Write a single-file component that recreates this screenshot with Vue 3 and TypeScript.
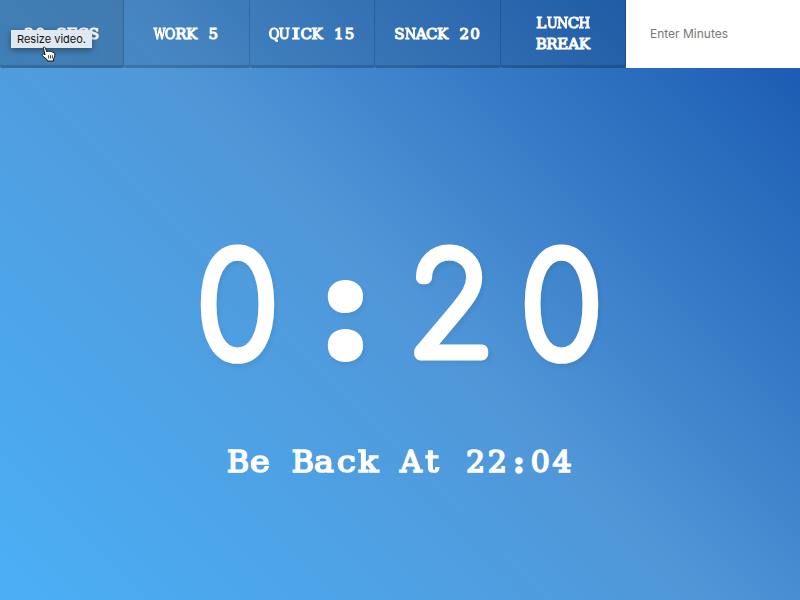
<script setup lang="ts">
const presets: string[] = ['20 SECS', 'WORK 5', 'QUICK 15', 'SNACK 20', 'LUNCH BREAK']

// Capitals are squeezed or stretched so each one fills a typewriter cell.
const FIT: Record<string, number> = { W: 0.76, N: 0.86, H: 0.87, U: 0.88, O: 0.88, Q: 0.88, I: 1.4 }
const presetWords = presets.map((label) => ({
  label,
  stacked: label.length > 8,
  words: label.split(' ').map((word) => [...word].map((ch) => ({ ch, scale: FIT[ch] ?? 1 }))),
}))

const endWords: string[][] = 'Be Back At 22:04'.split(' ').map((w) => [...w])
</script>

<template>
  <div class="timer">
    <div class="controls">
      <button v-for="(p, i) in presetWords" :key="p.label" class="preset" :class="{ active: i === 0, stacked: p.stacked }">
        <span v-for="(word, w) in p.words" :key="w" class="word"><span v-for="(c, k) in word" :key="k" class="cell"><span class="glyph" :style="{ transform: `scaleX(${c.scale})` }">{{ c.ch }}</span></span></span>
      </button>
      <form class="custom">
        <input class="minutes" type="text" placeholder="Enter Minutes" />
      </form>
    </div>
    <main class="display">
      <svg class="time-left" viewBox="0 0 432 140" width="432" height="140">
        <g fill="#fff" stroke="#fff" stroke-linejoin="round" text-anchor="middle">
          <text class="digit" transform="translate(53.500 116) scale(.94 .98)">0</text>
          <text class="colon" transform="translate(161.500 112) scale(1.080 1)">:</text>
          <text class="digit" transform="translate(267 113.500) scale(.96 .96)">2</text>
          <text class="digit" transform="translate(377.500 116) scale(.94 .98)">0</text>
        </g>
      </svg>
      <p class="end-time"><span v-for="(word, w) in endWords" :key="w" class="word"><span v-for="(c, k) in word" :key="k" class="cell"><span class="glyph" :class="{ dots: c === ':', lower: /[a-z]/.test(c) }">{{ c }}</span></span></span></p>
    </main>
    <div class="tooltip">Resize video.</div>
    <svg class="cursor" viewBox="0 0 16 17" width="16" height="17">
      <path d="M4.100 8.700 2.300 2.300C1.900.9 3.700.5 4.200 1.700L6 6c0-1.200 1.600-1.400 2-.2.3-1 1.700-1 2 .2.5-.8 1.800-.4 2 .7 1.200-.5 1.800.4 1.800 1.400.1 2.200-.5 3.500-1.200 4.700l-.1 2.200H6.300l-.4-1.600C4.700 12.500 3.200 11.200 1.300 9.800.3 8.800 1.500 7.400 2.700 8z" fill="#fff" stroke="#111" stroke-width="1" stroke-linejoin="round" />
      <path d="M7.600 9.200v3.300M9.500 9.200v3.300M11.400 9.200v3.300" stroke="#111" stroke-width=".8" />
    </svg>
  </div>
</template>

<style>
body {
  margin: 0;
}
</style>

<style scoped>
.timer {
  position: relative;
  display: flex;
  flex-direction: column;
  width: 100%;
  height: 100vh;
  overflow: hidden;
  color: #fff;
  font-family: 'DejaVu Serif', serif;
  background: linear-gradient(45deg, #4baff6 0%, #5097d8 50%, #1656af 100%);
}

.controls {
  display: flex;
  height: 68px;
}

.preset {
  display: flex;
  flex: 0 0 125.5px;
  gap: 10.8px;
  align-items: center;
  justify-content: center;
  box-sizing: border-box;
  margin: 0;
  padding: 3px 0 0;
  border: 0;
  border-right: 1px solid rgba(0, 0, 0, 0.16);
  border-bottom: 3px solid rgba(0, 0, 0, 0.16);
  border-radius: 0 0 2px 2px;
  background: rgba(0, 0, 0, 0.1);
  color: #fff;
  font-family: inherit;
  font-size: 15px;
  font-weight: 400;
  line-height: 21px;
  -webkit-text-stroke: 1.1px #fff;
}

.preset.stacked {
  flex-direction: column;
  gap: 0;
}

.preset.active {
  flex-basis: 124px;
  background: rgba(0, 0, 0, 0.18);
}

.word {
  display: flex;
}

.cell {
  display: flex;
  justify-content: center;
  width: 10.8px;
}

.glyph {
  display: block;
  flex: none;
}

.custom {
  display: flex;
  flex: 1;
}

.minutes {
  flex: 1;
  min-width: 0;
  padding: 0 24px 2px;
  border: 0;
  background: #fff;
  font-family: Inter, sans-serif;
  font-size: 12px;
}

.minutes::placeholder {
  color: #777;
}

.display {
  display: flex;
  flex: 1;
  flex-direction: column;
  align-items: center;
}

.time-left {
  margin-top: 172px;
  overflow: visible;
  filter: drop-shadow(2px 3px 2px rgba(0, 0, 0, 0.06));
}

.digit {
  font-family: Inter, sans-serif;
  font-size: 145px;
  font-weight: 100;
  stroke-width: 13.5px;
}

.colon {
  font-family: 'Open Sans', sans-serif;
  font-size: 116px;
  font-weight: 600;
  stroke-width: 16px;
}

.end-time {
  display: flex;
  gap: 21.6px;
  margin: 57px 0 0;
  font-size: 30px;
  line-height: 50px;
  -webkit-text-stroke: 1.7px #fff;
}

.end-time .cell {
  width: 21.6px;
}

.lower {
  transform: scaleX(1.12);
}

.dots {
  -webkit-text-stroke: 3.5px #fff;
}

.tooltip {
  position: absolute;
  top: 30px;
  left: 11px;
  width: 81px;
  height: 18px;
  background: #dfe9ef;
  box-shadow: 0 2px 6px rgba(0, 0, 0, 0.4);
  color: #111;
  font-family: Inter, sans-serif;
  font-size: 11px;
  line-height: 18px;
  text-align: center;
  white-space: nowrap;
}

.cursor {
  position: absolute;
  top: 46px;
  left: 41px;
}
</style>
